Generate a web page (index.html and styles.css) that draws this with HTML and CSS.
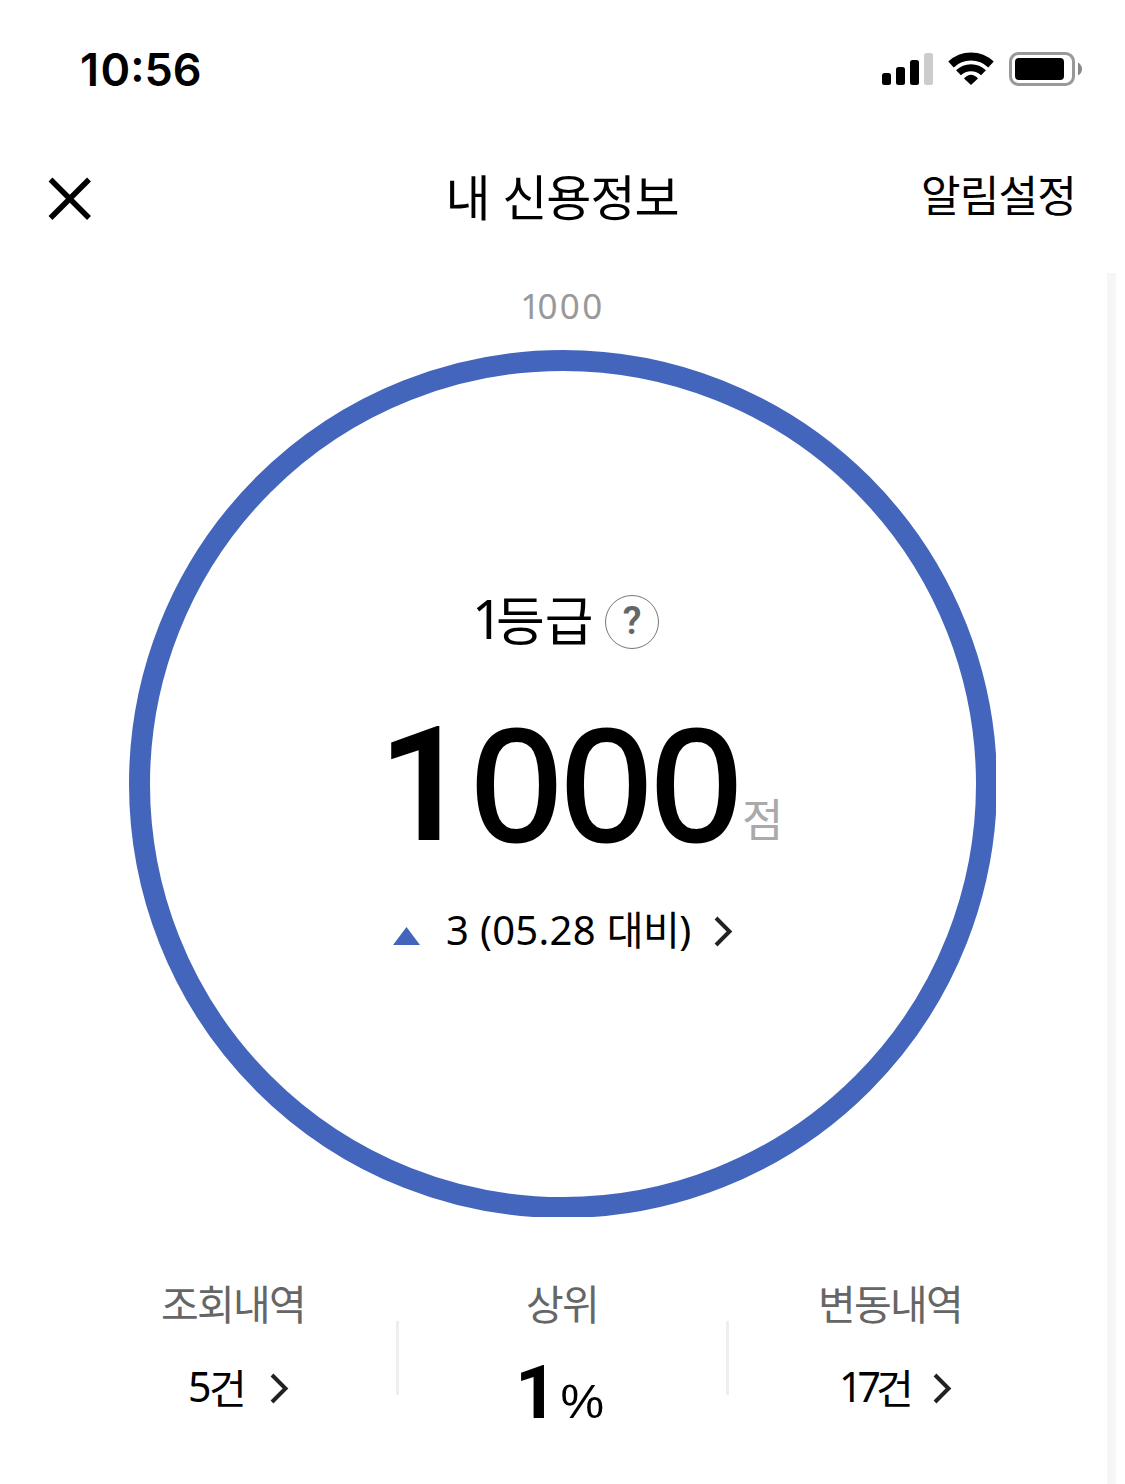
FILE: index.html
```html
<!DOCTYPE html>
<html lang="ko">
<head>
<meta charset="utf-8">
<title>내 신용정보</title>
<link rel="stylesheet" href="styles.css">
</head>
<body>
	<div class="status-bar">
		<span class="time"><span class="hour">1</span>0:56</span>
		<svg class="status-icons" width="201" height="34" viewBox="0 0 201 34">
			<rect x="0" y="21" width="9" height="12" rx="2.5"/>
			<rect x="14" y="15" width="9" height="18" rx="2.5"/>
			<rect x="28" y="8" width="9" height="25" rx="2.5"/>
			<rect x="42" y="1" width="9" height="32" rx="2.5" fill="#ccc"/>
			<g fill="none" stroke="#000">
				<path d="M69 12.5A29 29 0 0 1 109 12.5" stroke-width="8"/>
				<path d="M76.5 20.800A18 18 0 0 1 101.500 20.800" stroke-width="7"/>
			</g>
			<path d="M89 33L82 26.500Q89 19 96 26.500Z"/>
			<rect x="128.500" y="1.500" width="63" height="31" rx="8" fill="none" stroke="#999" stroke-width="3"/>
			<rect x="133" y="6" width="49" height="22" rx="4"/>
			<path d="M196 10.500Q200 13 200 17T196 23.500Z" fill="#888"/>
		</svg>
	</div>

	<div class="nav-bar">
		<svg class="close" width="44" height="44" viewBox="0 0 44 44">
			<path d="M2.500 2.500L41 41M41 2.500L2.500 41" stroke="#000" stroke-width="5.500"/>
		</svg>
		<h1 class="title">내 신용정보</h1>
		<span class="alarm">알림설정</span>
	</div>

	<div class="content">
		<div class="max-score"><span class="one">1</span>000</div>

		<div class="gauge">
			<svg class="ring" width="867" height="867" viewBox="0 0 867 867">
				<circle cx="434" cy="434" r="423.500" fill="none" stroke="#4366bc" stroke-width="21"/>
			</svg>
			<div class="gauge-text">
				<div class="grade"><span class="grade-num">1</span><span class="grade-unit">등급</span><span class="help">?</span></div>
				<div class="score"><span class="score-num"><span class="one">1</span>000</span><span class="score-unit">점</span></div>
				<div class="change">
					<svg class="up" width="27" height="18" viewBox="0 0 27 18"><path d="M13.500 0L27 18H0Z" fill="#4366bc"/></svg>
					<span class="change-text">3 (05.28 <span class="ko">대비</span>)</span>
					<svg class="arrow" width="19" height="31" viewBox="0 0 19 31"><path d="M2 2L15.500 15.500L2 29" fill="none" stroke="#222" stroke-width="4"/></svg>
				</div>
			</div>
		</div>

		<div class="summary">
			<div class="item item-view">
				<div class="label">조회내역</div>
				<div class="value"><span class="num">5</span><span class="unit">건</span>
					<svg class="arrow" width="19" height="31" viewBox="0 0 19 31"><path d="M2 2L15.500 15.500L2 29" fill="none" stroke="#222" stroke-width="4"/></svg>
				</div>
			</div>
			<div class="divider"></div>
			<div class="item item-rank">
				<div class="label">상위</div>
				<div class="value"><span class="rank">1</span><span class="percent">%</span></div>
			</div>
			<div class="divider"></div>
			<div class="item item-change">
				<div class="label">변동내역</div>
				<div class="value"><span class="num">17</span><span class="unit">건</span>
					<svg class="arrow" width="19" height="31" viewBox="0 0 19 31"><path d="M2 2L15.500 15.500L2 29" fill="none" stroke="#222" stroke-width="4"/></svg>
				</div>
			</div>
		</div>
	</div>
</body>
</html>
```
FILE: styles.css
```css
* {
	box-sizing: border-box;
}

body {
	margin: 0;
	height: 1484px;
	overflow: hidden;
	background: #fff;
	color: #000;
	font-family: "Noto Sans CJK KR", sans-serif;
}

.status-bar {
	display: flex;
	justify-content: space-between;
	height: 135px;
	padding: 52px 42px 0 80px;
}

.time {
	font: 600 45px/36px Inter, sans-serif;
}

.hour {
	letter-spacing: 1.5px;
}

.nav-bar {
	display: grid;
	grid-template-columns: 300px 1fr 300px;
	align-items: start;
	height: 138px;
	padding: 31px 49px 0 48px;
}

.close {
	margin-top: 11px;
}

.title {
	margin: 0;
	font-size: 49px;
	font-weight: 400;
	line-height: 58px;
	letter-spacing: -1px;
	text-align: center;
}

.alarm {
	font-size: 43px;
	line-height: 54px;
	letter-spacing: -0.8px;
	text-align: right;
}

.content {
	height: 1211px;
	margin-right: 9px;
	border-right: 9px solid #f6f6f6;
	padding: 13px 0 0 18px;
}

.max-score {
	height: 64px;
	font: 400 35px/40px "Noto Sans", sans-serif;
	letter-spacing: 2.4px;
	color: #999;
	text-align: center;
}

.max-score .one {
	letter-spacing: -3px;
}

.gauge {
	display: grid;
	width: 867px;
	height: 867px;
	margin-left: 111px;
}

.ring,
.gauge-text {
	grid-area: 1 / 1;
}

.gauge-text {
	padding-top: 236px;
}

.grade {
	display: flex;
	height: 120px;
	padding-left: 343px;
	font-size: 53px;
	line-height: 65px;
}

.grade-num {
	width: 24px;
	font-family: "Noto Sans", sans-serif;
	font-size: 54px;
}

.grade-unit {
	width: 109px;
}

.help {
	width: 54px;
	height: 54px;
	margin-top: 9px;
	border: 1.5px solid #777;
	border-radius: 50%;
	font: 600 38px/51px Roboto, sans-serif;
	color: #666;
	text-align: center;
}

.score {
	display: flex;
	align-items: baseline;
	height: 200px;
	padding-left: 249px;
}

/* regular weight thickened by a stroke, the bold zeros are too heavy */
.score-num {
	width: 364px;
	font: 400 160px/157px "Liberation Sans", sans-serif;
	letter-spacing: 1px;
	-webkit-text-stroke: 3px #000;
}

.score-num .one {
	display: inline-block;
	width: 94px;
	font-family: Roboto, sans-serif;
	font-weight: 600;
	-webkit-text-stroke: 0;
}

.score-unit {
	align-self: flex-start;
	margin-top: 82px;
	font-size: 45px;
	line-height: 60px;
	color: #aaa;
}

.change {
	display: flex;
	align-items: center;
	height: 50px;
	padding-left: 264px;
}

.up {
	margin-top: 9px;
}

.change-text {
	width: 268px;
	margin: -4px 0 0 26px;
	white-space: nowrap;
	font: 400 40px/50px "Noto Sans", sans-serif;
	letter-spacing: 0.3px;
}

.ko {
	font-family: "Noto Sans CJK KR", sans-serif;
	letter-spacing: -0.5px;
}

.summary {
	display: grid;
	grid-template-columns: 378px 3px 327px 3px 1fr;
	margin-top: 60px;
}

.divider {
	height: 74px;
	margin-top: 44px;
	background: #eee;
}

.label {
	font-size: 41px;
	line-height: 50px;
	letter-spacing: -1.7px;
	color: #666;
}

.value {
	display: flex;
	align-items: center;
	height: 50px;
	margin-top: 36px;
	font-size: 41px;
	line-height: 50px;
}

.num {
	font-family: "Noto Sans", sans-serif;
	letter-spacing: -2.5px;
}

.num,
.unit {
	margin-top: -4px;
}

.value .arrow {
	margin-left: 23px;
}

.item-view .label {
	padding-left: 143px;
}

.item-view .value {
	padding-left: 170px;
}

.item-rank .label {
	padding-left: 127px;
}

.item-rank .value {
	align-items: baseline;
	padding-left: 116px;
}

.item-change .label {
	padding-left: 89px;
}

.item-change .value {
	padding-left: 110px;
}

.item-change .num {
	letter-spacing: -5px;
}

.item-change .arrow {
	margin-left: 19px;
}

.rank {
	font: 700 74px/60px Roboto, sans-serif;
}

.percent {
	margin-left: 3px;
	font: 400 49px/60px "Liberation Sans", sans-serif;
}
```
